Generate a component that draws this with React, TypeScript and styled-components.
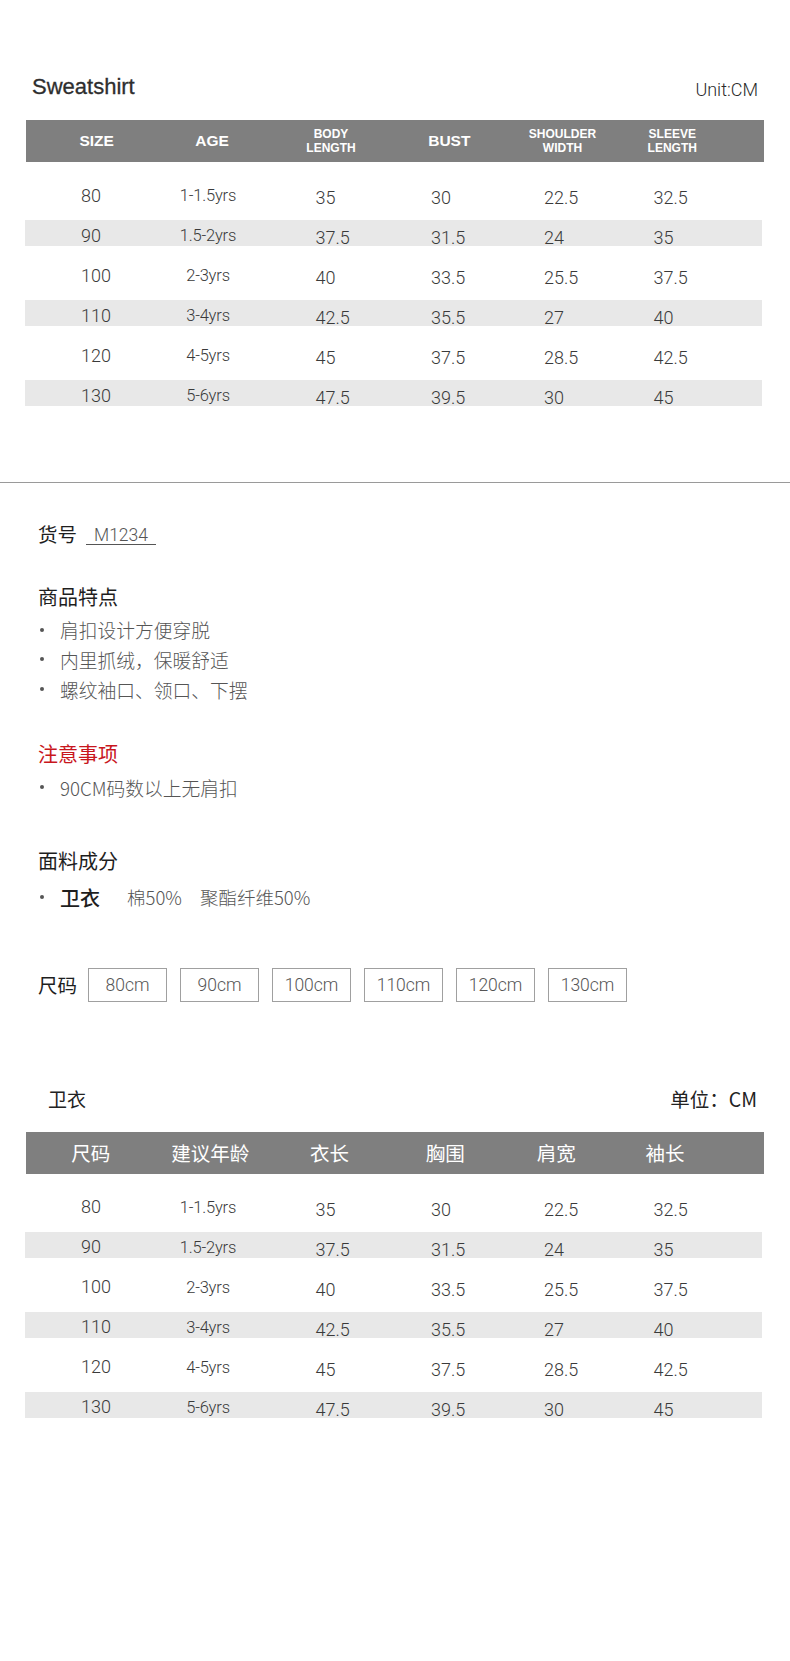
import React from "react";
import styled, { createGlobalStyle, css } from "styled-components";

const GlobalStyle = createGlobalStyle`
  html, body { margin: 0; padding: 0; background: #fff; }
  body { font-family: "Liberation Sans", Arial, sans-serif; }
  * { box-sizing: border-box; }
`;

const CJK = `"Noto Sans CJK SC", "Noto Sans", sans-serif`;
const LIGHT = `Roboto, "Liberation Sans", sans-serif`;

const Page = styled.div`
  width: 790px;
  min-height: 1661px;
  background: #fff;
  display: flex;
  flex-direction: column;
`;

const TableSection = styled.section<{ $top: number }>`
  margin-top: ${(p) => p.$top}px;
  display: flex;
  flex-direction: column;
`;

const TitleRow = styled.div<{ $left: number; $right: number }>`
  display: flex;
  justify-content: space-between;
  align-items: flex-start;
  height: 26px;
  padding: 0 ${(p) => p.$right}px 0 ${(p) => p.$left}px;
`;

const TableTitle = styled.h2<{ $cjk?: boolean }>`
  margin: 0;
  line-height: 26px;
  font-weight: 400;
  ${(p) =>
    p.$cjk
      ? css`
          font-family: ${CJK};
          font-size: 19px;
          color: #222;
        `
      : css`
          font-family: "Liberation Sans", Arial, sans-serif;
          font-size: 22px;
          color: #2e2e2e;
          -webkit-text-stroke: 0.3px #2e2e2e;
        `}
`;

const UnitLabel = styled.span<{ $cjk?: boolean }>`
  line-height: 26px;
  ${(p) =>
    p.$cjk
      ? css`
          font-family: ${CJK};
          font-size: 19.5px;
          color: #222;
        `
      : css`
          font-family: ${LIGHT};
          font-weight: 300;
          font-size: 18px;
          color: #2a2a2a;
          padding-top: 3px;
        `}
`;

const HeaderBar = styled.div<{ $cols: string; $pad: number }>`
  margin: 20px 26px 0 26px;
  height: 42px;
  background: #7f7f7f;
  display: grid;
  grid-template-columns: ${(p) => p.$cols};
  padding-left: ${(p) => p.$pad}px;
  align-items: center;
  color: #fff;
`;

const HeaderCell = styled.div<{ $small?: boolean; $cjk?: boolean }>`
  text-align: center;
  white-space: nowrap;
  ${(p) =>
    p.$cjk
      ? css`
          font-family: ${CJK};
          font-size: 19.5px;
          font-weight: 400;
          line-height: 24px;
        `
      : css`
          font-family: "Liberation Sans", Arial, sans-serif;
          font-weight: 700;
          font-size: ${p.$small ? 12 : 15.5}px;
          line-height: ${p.$small ? 14 : 18}px;
        `}
`;

const Rows = styled.div`
  margin: 18px 28px 0 25px;
  display: flex;
  flex-direction: column;
  gap: 14px;
`;

const Row = styled.div<{ $striped: boolean }>`
  height: 26px;
  background: ${(p) => (p.$striped ? "#e8e8e8" : "transparent")};
  display: grid;
  grid-template-columns: 69px 116px 115.5px 113px 109.5px 1fr;
  padding-left: 56px;
  font-family: ${LIGHT};
  font-weight: 300;
  color: #3a3a3a;
  line-height: 26px;
  white-space: nowrap;
`;

const SizeCell = styled.div`
  font-size: 18px;
  padding-top: 2.5px;
`;

const AgeCell = styled.div`
  font-size: 16.5px;
  padding-top: 3px;
  text-align: center;
  letter-spacing: -0.2px;
`;

const MeasureCell = styled.div`
  font-size: 18px;
  padding-top: 5px;
  padding-left: 49.5px;
`;

const Separator = styled.hr`
  margin: 76px 0 0 0;
  border: 0;
  height: 1px;
  background: #9a9a9a;
  width: 100%;
`;

const Info = styled.section`
  display: flex;
  flex-direction: column;
  padding-left: 38px;
  font-family: ${CJK};
`;

const CodeRow = styled.div`
  margin-top: 36px;
  height: 30px;
  display: flex;
  align-items: center;
`;

const CodeLabel = styled.span`
  font-size: 19.5px;
  color: #1e1e1e;
  line-height: 30px;
`;

const CodeValue = styled.span`
  margin-left: 9px;
  margin-top: 4px;
  padding: 0 8px;
  border-bottom: 1px solid #555;
  font-family: ${LIGHT};
  font-weight: 300;
  font-size: 17.5px;
  line-height: 17.5px;
  color: #555;
`;

const SectionTitle = styled.h3<{ $gap: number; $red?: boolean }>`
  margin: ${(p) => p.$gap}px 0 0 0;
  height: 30px;
  line-height: 30px;
  font-size: 20px;
  font-weight: 400;
  color: ${(p) => (p.$red ? "#c8161d" : "#1e1e1e")};
`;

const List = styled.ul<{ $gap: number }>`
  margin: ${(p) => p.$gap}px 0 0 0;
  padding: 0;
  list-style: none;
  display: flex;
  flex-direction: column;
`;

const Item = styled.li`
  height: 29.7px;
  display: flex;
  align-items: center;
  font-size: 18.75px;
  font-weight: 300;
  color: #555;
  white-space: nowrap;
`;

const Dot = styled.span`
  width: 4px;
  height: 4px;
  border-radius: 50%;
  background: #555;
  margin: 0 16.5px 0 1.5px;
  flex: none;
`;

const Garment = styled.span`
  font-size: 20px;
  font-weight: 500;
  color: #1e1e1e;
`;

const Fabric = styled.span<{ $gap: number }>`
  margin-left: ${(p) => p.$gap}px;
  font-size: 18.5px;
  font-weight: 300;
  color: #555;
`;

const SizeRow = styled.div`
  margin-top: 56px;
  height: 34px;
  display: flex;
  align-items: center;
  gap: 13px;
`;

const SizeLabel = styled.span`
  font-size: 19.5px;
  color: #1e1e1e;
  line-height: 34px;
  margin-right: -2px;
`;

const SizeBox = styled.span`
  width: 79px;
  height: 34px;
  border: 1px solid #a0a0a0;
  display: flex;
  align-items: center;
  justify-content: center;
  font-family: ${LIGHT};
  font-weight: 300;
  font-size: 17.5px;
  color: #555;
`;

type HeaderLabel = string[];

const DATA: string[][] = [
  ["80", "1-1.5yrs", "35", "30", "22.5", "32.5"],
  ["90", "1.5-2yrs", "37.5", "31.5", "24", "35"],
  ["100", "2-3yrs", "40", "33.5", "25.5", "37.5"],
  ["110", "3-4yrs", "42.5", "35.5", "27", "40"],
  ["120", "4-5yrs", "45", "37.5", "28.5", "42.5"],
  ["130", "5-6yrs", "47.5", "39.5", "30", "45"],
];

interface SizeTableProps {
  top: number;
  title: string;
  unit: string;
  cjk?: boolean;
  titleLeft: number;
  titleRight: number;
  headers: HeaderLabel[];
  cols: string;
  pad: number;
}

function SizeTable({ top, title, unit, cjk, titleLeft, titleRight, headers, cols, pad }: SizeTableProps) {
  return (
    <TableSection $top={top}>
      <TitleRow $left={titleLeft} $right={titleRight}>
        <TableTitle $cjk={cjk}>{title}</TableTitle>
        <UnitLabel $cjk={cjk}>{unit}</UnitLabel>
      </TitleRow>
      <HeaderBar $cols={cols} $pad={pad}>
        {headers.map((h, i) => (
          <HeaderCell key={i} $small={h.length > 1} $cjk={cjk}>
            {h.map((line, j) => (
              <div key={j}>{line}</div>
            ))}
          </HeaderCell>
        ))}
      </HeaderBar>
      <Rows>
        {DATA.map((r, i) => (
          <Row key={i} $striped={i % 2 === 1}>
            <SizeCell>{r[0]}</SizeCell>
            <AgeCell>{r[1]}</AgeCell>
            <MeasureCell>{r[2]}</MeasureCell>
            <MeasureCell>{r[3]}</MeasureCell>
            <MeasureCell>{r[4]}</MeasureCell>
            <MeasureCell>{r[5]}</MeasureCell>
          </Row>
        ))}
      </Rows>
    </TableSection>
  );
}

export default function App() {
  return (
    <>
      <GlobalStyle />
      <Page>
        <SizeTable
          top={74}
          title="Sweatshirt"
          unit="Unit:CM"
          titleLeft={32}
          titleRight={32}
          headers={[["SIZE"], ["AGE"], ["BODY", "LENGTH"], ["BUST"], ["SHOULDER", "WIDTH"], ["SLEEVE", "LENGTH"]]}
          cols="113.8px 117.15px 120.6px 116px 110.3px 109.3px"
          pad={13.8}
        />
        <Separator />
        <Info>
          <CodeRow>
            <CodeLabel>货号</CodeLabel>
            <CodeValue>M1234</CodeValue>
          </CodeRow>
          <SectionTitle $gap={33}>商品特点</SectionTitle>
          <List $gap={2.8}>
            <Item><Dot />肩扣设计方便穿脱</Item>
            <Item><Dot />内里抓绒，保暖舒适</Item>
            <Item><Dot />螺纹袖口、领口、下摆</Item>
          </List>
          <SectionTitle $gap={35} $red>注意事项</SectionTitle>
          <List $gap={3.4}>
            <Item><Dot />90CM码数以上无肩扣</Item>
          </List>
          <SectionTitle $gap={43.6}>面料成分</SectionTitle>
          <List $gap={6.75}>
            <Item>
              <Dot />
              <Garment>卫衣</Garment>
              <Fabric $gap={27}>棉50%</Fabric>
              <Fabric $gap={18}>聚酯纤维50%</Fabric>
            </Item>
          </List>
          <SizeRow>
            <SizeLabel>尺码</SizeLabel>
            {["80cm", "90cm", "100cm", "110cm", "120cm", "130cm"].map((s) => (
              <SizeBox key={s}>{s}</SizeBox>
            ))}
          </SizeRow>
        </Info>
        <SizeTable
          top={84}
          title="卫衣"
          unit="单位：CM"
          cjk
          titleLeft={48}
          titleRight={33}
          headers={[["尺码"], ["建议年龄"], ["衣长"], ["胸围"], ["肩宽"], ["袖长"]]}
          cols="118.9px 120px 118.5px 112.95px 109.15px 108.3px"
          pad={5.35}
        />
      </Page>
    </>
  );
}
